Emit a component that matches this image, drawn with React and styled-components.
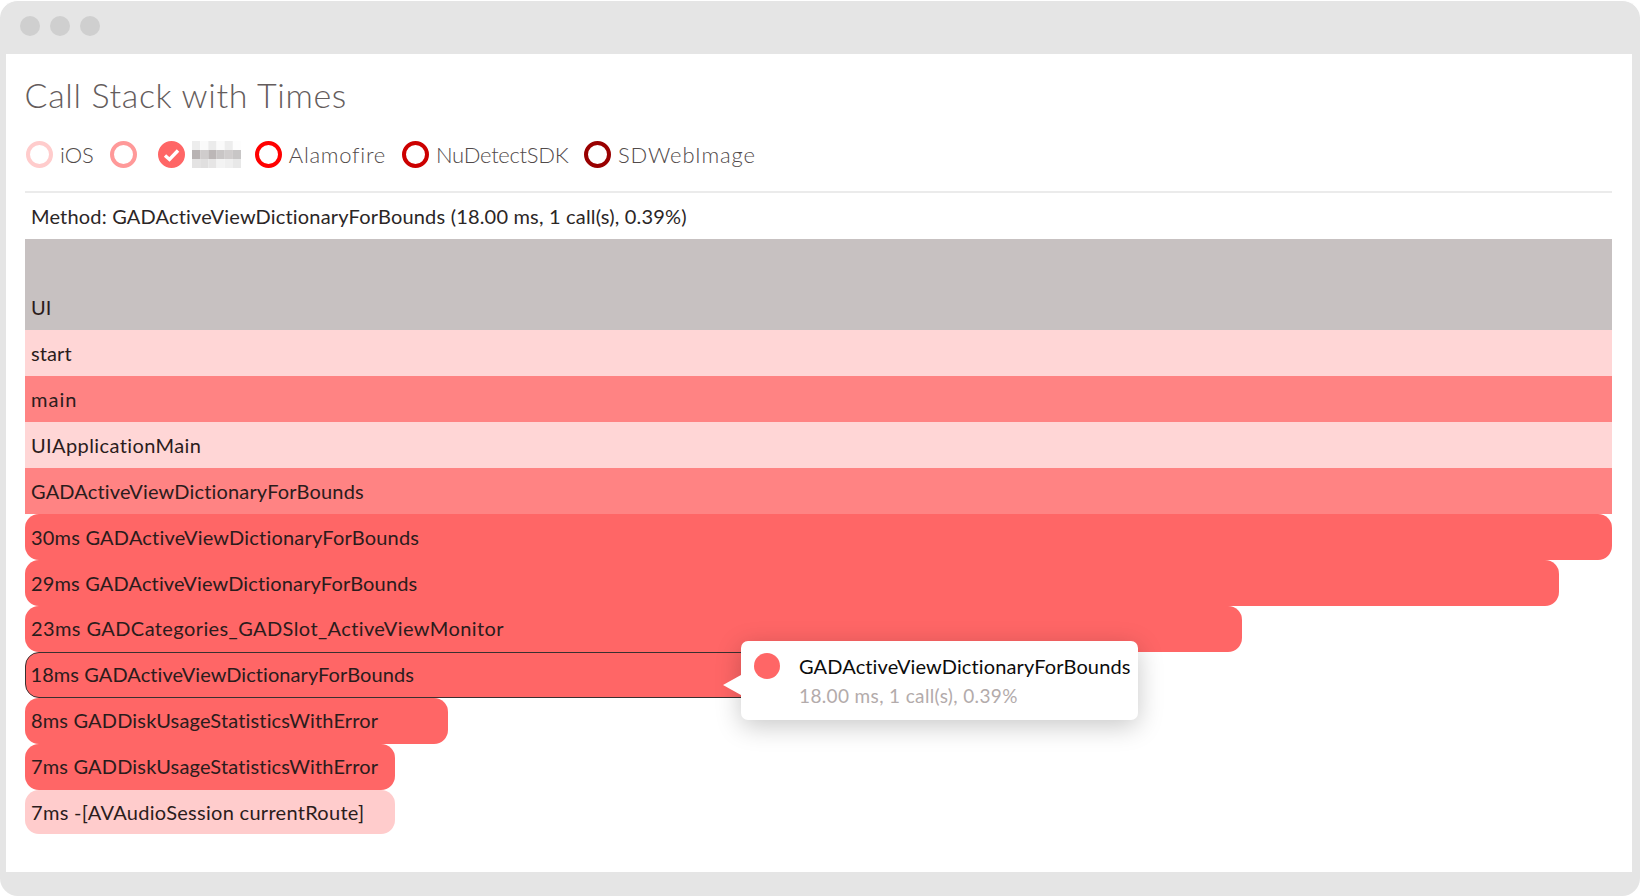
import React from "react";
import styled, { createGlobalStyle } from "styled-components";

const Global = createGlobalStyle`
  html, body { margin: 0; padding: 0; background: #fff; }
  body { font-family: "Lato", "Liberation Sans", sans-serif; width: 1640px; height: 896px; overflow: hidden; }
`;

const Frame = styled.div`
  box-sizing: border-box;
  width: 1640px;
  height: 896px;
  background: #e5e5e5;
  border-radius: 18px;
  padding: 0 8px 24px 6px;
  display: flex;
  flex-direction: column;
  border-top: 1px solid #fff;
`;
const TitleBar = styled.div`
  height: 53px;
  flex: none;
  display: flex;
  align-items: center;
  gap: 10px;
  padding: 0 0 3px 13.5px;
  box-sizing: border-box;
`;
const Dot = styled.span`
  width: 20px;
  height: 20px;
  border-radius: 50%;
  background: #cfcfcf;
`;
const Content = styled.main`
  flex: 1;
  background: #fff;
  padding: 0 20px 0 18.5px;
  display: flex;
  flex-direction: column;
`;
const Title = styled.h1`
  margin: 21px 0 0;
  font-size: 34px;
  line-height: 40px;
  font-weight: 300;
  color: #645c5c;
  letter-spacing: 0.65px;
`;
const Legend = styled.div`
  display: flex;
  align-items: center;
  height: 28px;
  margin-top: 25.5px;
  padding-left: 1.5px;
`;
const Item = styled.div`
  display: flex;
  align-items: center;
  gap: 7px;
  margin-right: ${(p) => p.$gap}px;
`;
const Ring = styled.span`
  box-sizing: border-box;
  width: 27px;
  height: 27px;
  border-radius: 50%;
  border: 4px solid ${(p) => p.$color};
  background: ${(p) => (p.$checked ? p.$color : "transparent")};
  display: flex;
  align-items: center;
  justify-content: center;
`;
const LegendLabel = styled.span`
  font-size: 22px;
  line-height: 28px;
  font-weight: 300;
  color: #514a4a;
  letter-spacing: ${(p) => p.$ls || 0}px;
`;
const Rule = styled.hr`
  margin: 22.5px 0 0;
  border: 0;
  height: 2px;
  background: #ebebeb;
`;
const MethodLine = styled.div`
  font-size: 20px;
  line-height: 46px;
  height: 46px;
  padding-left: 6.5px;
  color: #2b2626;
  letter-spacing: 0.18px;
`;
const Stack = styled.div`
  position: relative;
  display: flex;
  flex-direction: column;
`;
const Bar = styled.div`
  box-sizing: border-box;
  width: ${(p) => p.$width}px;
  height: ${(p) => p.$height || 46}px;
  flex: none;
  background: ${(p) => p.$color};
  border-radius: ${(p) => (p.$round ? "14px" : "0")};
  border: ${(p) => (p.$active ? "1px solid #3a3030" : "0")};
  padding: 0 0 ${(p) => p.$lift}px ${(p) => (p.$active ? 5 : 6.5)}px;
  display: flex;
  align-items: flex-end;
`;
const BarLabel = styled.span`
  font-size: 20px;
  line-height: 44px;
  color: #2b1c1c;
  white-space: nowrap;
  letter-spacing: ${(p) => p.$ls}px;
`;
const Tooltip = styled.div`
  position: absolute;
  left: 716.5px;
  top: 402px;
  width: 397px;
  height: 79px;
  box-sizing: border-box;
  background: #fff;
  border-radius: 7px;
  box-shadow: 0 6px 26px rgba(0, 0, 0, 0.22);
  padding: 12px 0 0 13px;
  display: flex;
  gap: 19px;
  &::before {
    content: "";
    position: absolute;
    left: -18px;
    top: 34px;
    border-style: solid;
    border-width: 10.5px 18px 10.5px 0;
    border-color: transparent #fff transparent transparent;
  }
`;
const TipDot = styled.span`
  flex: none;
  width: 26px;
  height: 26px;
  border-radius: 50%;
  background: #ff6666;
`;
const TipText = styled.div`
  display: flex;
  flex-direction: column;
  margin-top: -1px;
`;
const TipTitle = styled.div`
  font-size: 20px;
  line-height: 28px;
  color: #0c0c0c;
  white-space: nowrap;
  letter-spacing: 0.13px;
`;
const TipSub = styled.div`
  font-size: 19px;
  line-height: 32px;
  color: #b3abab;
  white-space: nowrap;
  letter-spacing: 0.36px;
`;

const palette = [
  ["#ededed", "#fafafa", "#ebebeb", "#fafafa", "#ededed", "#fdfdfd"],
  ["#b8b3b3", "#cfcccc", "#bcb7b7", "#c9c6c6", "#d0cdcd", "#c8c6c6"],
  ["#e4e3e3", "#e0dfdf", "#e6e5e5", "#f3f3f3", "#efefef", "#e8e8e8"],
];

const Mosaic = () => (
  <svg width="49" height="27" viewBox="0 0 49 27" aria-hidden="true">
    {palette.flatMap((row, r) =>
      row.map((c, i) => (
        <rect key={`${r}-${i}`} x={i * 8.17} y={r * 9} width="8.2" height="9" fill={c} />
      ))
    )}
  </svg>
);

const Check = () => (
  <svg width="17" height="14" viewBox="0 0 17 14" aria-hidden="true">
    <path d="M2 7.5 L6.5 11.5 L15 2.5" fill="none" stroke="#fff" strokeWidth="3.4" />
  </svg>
);

const legend = [
  { color: "#ffcccc", label: "iOS", gap: 16 },
  { color: "#ff9999", gap: 21 },
  { color: "#ff6666", checked: true, mosaic: true, gap: 14 },
  { color: "#ff0000", label: "Alamofire", gap: 16, ls: 0.72 },
  { color: "#cc0000", label: "NuDetectSDK", gap: 15.5, ls: -0.3 },
  { color: "#990000", label: "SDWebImage", gap: 0, ls: 0.85 },
];

const bars = [
  { color: "#c7c1c1", width: 1587.5, height: 91, lift: 1, label: "UI", ls: 0.1 },
  { color: "#ffd6d6", width: 1587.5, lift: 1, label: "start", ls: 0.1 },
  { color: "#ff8383", width: 1587.5, lift: 1, label: "main", ls: 1 },
  { color: "#ffd6d6", width: 1587.5, lift: 1, label: "UIApplicationMain", ls: 0.4 },
  { color: "#ff8383", width: 1587.5, lift: 1, label: "GADActiveViewDictionaryForBounds", ls: 0.17 },
  { color: "#ff6666", width: 1587.5, round: true, lift: 1, label: "30ms GADActiveViewDictionaryForBounds", ls: 0.2 },
  { color: "#ff6666", width: 1534, round: true, lift: 1, label: "29ms GADActiveViewDictionaryForBounds", ls: 0.15 },
  { color: "#ff6666", width: 1217, round: true, lift: 2, label: "23ms GADCategories_GADSlot_ActiveViewMonitor", ls: 0.4 },
  { color: "#ff6666", width: 760, round: true, active: true, lift: 1, label: "18ms GADActiveViewDictionaryForBounds", ls: 0.07 },
  { color: "#ff6666", width: 423, round: true, lift: 2, label: "8ms GADDiskUsageStatisticsWithError", ls: 0.16 },
  { color: "#ff6666", width: 370, round: true, lift: 2, label: "7ms GADDiskUsageStatisticsWithError", ls: 0.16 },
  { color: "#ffcccc", width: 370, height: 44, round: true, lift: 0, label: "7ms -[AVAudioSession currentRoute]", ls: 0.29 },
];

export default function App() {
  return (
    <>
      <Global />
      <Frame>
        <TitleBar>
          <Dot />
          <Dot />
          <Dot />
        </TitleBar>
        <Content>
          <Title>Call Stack with Times</Title>
          <Legend>
            {legend.map((it) => (
              <Item key={it.color} $gap={it.gap}>
                <Ring $color={it.color} $checked={it.checked}>
                  {it.checked && <Check />}
                </Ring>
                {it.label && <LegendLabel $ls={it.ls}>{it.label}</LegendLabel>}
                {it.mosaic && <Mosaic />}
              </Item>
            ))}
          </Legend>
          <Rule />
          <MethodLine>Method: GADActiveViewDictionaryForBounds (18.00 ms, 1 call(s), 0.39%)</MethodLine>
          <Stack>
            {bars.map((b) => (
              <Bar key={b.label} $color={b.color} $width={b.width} $height={b.height} $round={b.round} $active={b.active} $lift={b.lift}>
                <BarLabel $ls={b.ls}>{b.label}</BarLabel>
              </Bar>
            ))}
            <Tooltip>
              <TipDot />
              <TipText>
                <TipTitle>GADActiveViewDictionaryForBounds</TipTitle>
                <TipSub>18.00 ms, 1 call(s), 0.39%</TipSub>
              </TipText>
            </Tooltip>
          </Stack>
        </Content>
      </Frame>
    </>
  );
}
